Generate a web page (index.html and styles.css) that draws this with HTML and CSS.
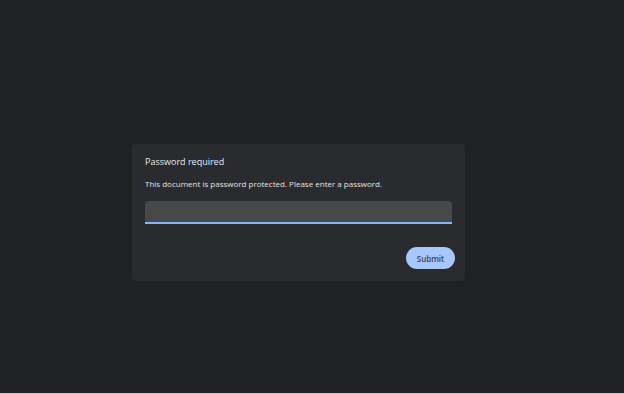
FILE: index.html
```html
<!DOCTYPE html>
<html>
<head>
<meta charset="utf-8">
<link rel="stylesheet" href="styles.css">
</head>
<body>
<div class="viewer">
  <div class="dialog">
    <div class="title">Password required</div>
    <div class="message">This document is password protected. Please enter a password.</div>
    <div class="field"><input class="input" type="password"></div>
    <div class="actions"><button class="submit">Submit</button></div>
  </div>
</div>
</body>
</html>
```
FILE: styles.css
```css
html, body {
  margin: 0;
  padding: 0;
  background: #c4c4c4;
}
body {
  font-family: "Open Sans", "Noto Sans", sans-serif;
}
.viewer {
  height: 393px;
  background: #202124;
  padding: 144px 0 0 132px;
  box-sizing: border-box;
}
.dialog {
  width: 333px;
  height: 137px;
  box-sizing: border-box;
  background: #2a2b2e;
  border-radius: 4px;
  padding: 11px 13px 0 13px;
  display: flex;
  flex-direction: column;
}
.title {
  color: #e8eaed;
  font-size: 9px;
  line-height: 14px;
}
.message {
  color: #e3e3e3;
  font-size: 8px;
  line-height: 11px;
  margin-top: 9px;
}
.field {
  margin-top: 12px;
}
.input {
  display: block;
  width: 307px;
  height: 23px;
  box-sizing: border-box;
  border: none;
  border-bottom: 2px solid #8ab4f8;
  border-radius: 4px 4px 0 0;
  background: #474948;
  margin: 0;
  padding: 0;
  outline: none;
}
.actions {
  display: flex;
  justify-content: flex-end;
  margin-top: 23px;
  margin-right: -3px;
}
.submit {
  width: 49px;
  height: 22px;
  border: none;
  border-radius: 11px;
  background: #a8c7fa;
  color: #34425e;
  font-family: "Open Sans", "Noto Sans", sans-serif;
  font-size: 8px;
  font-weight: 600;
  padding: 0;
}
```
